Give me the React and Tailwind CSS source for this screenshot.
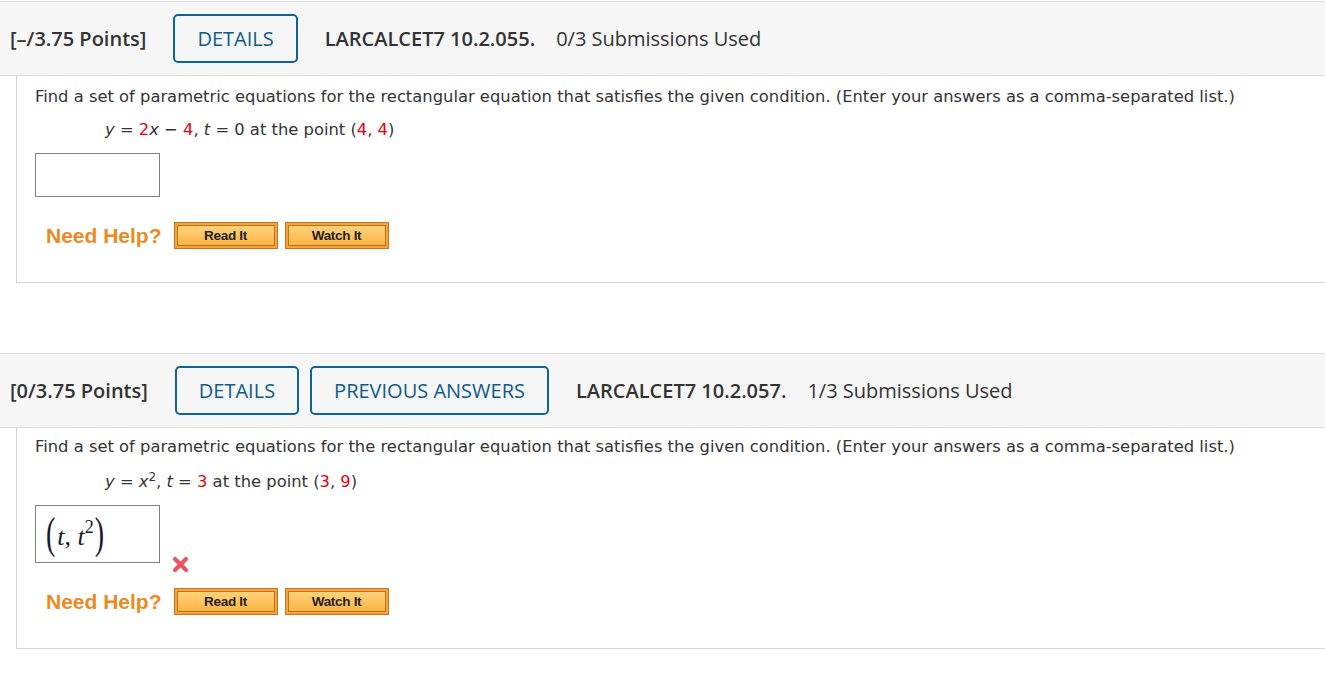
import React from 'react';

const body = { fontFamily: '"DejaVu Sans", Verdana, sans-serif' };

function HelpButton({ label }) {
  return (
    <button
      type="button"
      className="h-[27px] w-[104px] border border-[#c9741c] bg-[#f7a23c] p-[2px]"
    >
      <span
        className="flex h-full w-full items-center justify-center border border-[#b8741e] bg-gradient-to-b from-[#fed27a] to-[#fbb540] text-[13.5px] font-bold text-[#222] tracking-[-0.3px]"
        style={{ fontFamily: '"Liberation Sans", Arial, sans-serif' }}
      >
        {label}
      </span>
    </button>
  );
}

function OutlineButton({ children }) {
  return (
    <button
      type="button"
      className="h-[49px] rounded-[5px] border-2 border-[#0e6399] px-[22px] text-[20px] text-[#0e5a8e]"
    >
      {children}
    </button>
  );
}

function Header({ points, buttons, code, used }) {
  return (
    <div
      className="flex h-[75px] items-center border-y border-[#dddddd] bg-[#f6f6f6] pl-[10px] text-[#333]"
      style={{ fontFamily: '"Open Sans", sans-serif' }}
    >
      <span className="mr-[27px] text-[20px] font-semibold">{points}</span>
      <div className="flex gap-[11px]">
        {buttons.map((b) => (
          <OutlineButton key={b}>{b}</OutlineButton>
        ))}
      </div>
      <span className="ml-[27px] text-[20px] font-semibold">{code}</span>
      <span className="ml-[21px] text-[20px]">{used}</span>
    </div>
  );
}

function NeedHelp() {
  return (
    <div className="flex items-center">
      <span
        className="ml-[11px] mr-[12px] text-[21px] font-bold text-[#ec8a1e]"
        style={{ fontFamily: '"Liberation Sans", Arial, sans-serif' }}
      >
        Need Help?
      </span>
      <div className="flex gap-[7px]">
        <HelpButton label="Read It" />
        <HelpButton label="Watch It" />
      </div>
    </div>
  );
}

const R = ({ children }) => <span className="text-[#e8000d]">{children}</span>;

export default function App() {
  const prompt =
    'Find a set of parametric equations for the rectangular equation that satisfies the given condition. (Enter your answers as a comma-separated list.)';
  return (
    <div className="min-h-screen bg-white pt-px">
      {/* question 1 */}
      <Header
        points="[–/3.75 Points]"
        buttons={['DETAILS']}
        code="LARCALCET7 10.2.055."
        used="0/3 Submissions Used"
      />
      <div className="ml-[16px] h-[207px] border-b border-l border-[#d4d4d4] pl-[18px] pt-[9px] text-[16.35px] text-[#333]" style={body}>
        <p className="leading-[24px]">{prompt}</p>
        <p className="mt-[9px] pl-[70px] leading-[24px]">
          <i>y</i> = <R>2</R><i>x</i> − <R>4</R>, <i>t</i> = 0 at the point (<R>4</R>, <R>4</R>)
        </p>
        <div className="mt-[11px] h-[44px] w-[125px] border border-[#808080] bg-white" />
        <div className="mt-[23px]">
          <NeedHelp />
        </div>
      </div>

      <div className="h-[70px]" />

      {/* question 2 */}
      <Header
        points="[0/3.75 Points]"
        buttons={['DETAILS', 'PREVIOUS ANSWERS']}
        code="LARCALCET7 10.2.057."
        used="1/3 Submissions Used"
      />
      <div className="ml-[16px] h-[221px] border-b border-l border-[#d4d4d4] pl-[18px] pt-[7px] text-[16.35px] text-[#333]" style={body}>
        <p className="leading-[24px]">{prompt}</p>
        <p className="mt-[11px] pl-[70px] leading-[24px]">
          <i>y</i> = <i>x</i>
          <sup className="text-[12px]">2</sup>, <i>t</i> = <R>3</R> at the point (<R>3</R>, <R>9</R>)
        </p>
        <div className="mt-[11px] flex items-end">
          <div
            className="flex h-[58px] w-[125px] items-center border border-[#808080] bg-white pl-[10px] text-[#1a1a2e]"
            style={{ fontFamily: '"Liberation Serif", "Times New Roman", serif' }}
          >
            <span className="inline-block scale-y-[1.6] text-[28px] font-light leading-none">(</span>
            <i className="ml-[2px] mt-[6px] text-[26px] leading-none">t</i>
            <span className="mt-[6px] text-[26px] leading-none">,&nbsp;</span>
            <i className="mt-[6px] text-[26px] leading-none">t</i>
            <span className="-mt-[14px] text-[18px] leading-none">2</span>
            <span className="ml-[1px] inline-block scale-y-[1.6] text-[28px] font-light leading-none">)</span>
          </div>
          <svg width="17" height="17" viewBox="0 0 17 17" className="-mb-[10px] ml-[12px]">
            <path d="M3 3 L14 14 M14 3 L3 14" stroke="#f25060" strokeWidth="4.2" strokeLinecap="round" />
          </svg>
        </div>
        <div className="mt-[23px]">
          <NeedHelp />
        </div>
      </div>
    </div>
  );
}
